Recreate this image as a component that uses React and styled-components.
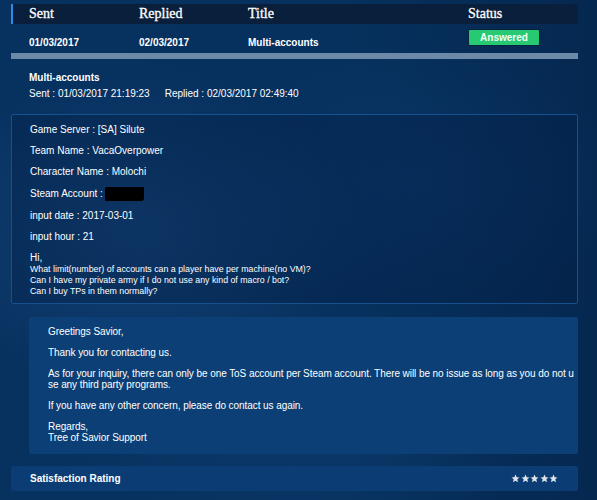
import React from "react";
import styled, { createGlobalStyle } from "styled-components";

const GlobalStyle = createGlobalStyle`
  html, body {
    margin: 0;
    padding: 0;
    background: #062c58;
  }
  body {
    font-family: "Liberation Sans", Arial, sans-serif;
    color: #ffffff;
  }
`;

const Page = styled.div`
  width: 597px;
  height: 500px;
  overflow: hidden;
  box-sizing: border-box;
  padding: 4px 19px 0 11px;
  background:
    radial-gradient(ellipse 220px 160px at 140px 230px, rgba(40, 95, 160, 0.35), transparent),
    radial-gradient(ellipse 200px 140px at 420px 180px, rgba(20, 70, 130, 0.3), transparent),
    radial-gradient(ellipse 260px 120px at 300px 420px, rgba(30, 85, 150, 0.25), transparent),
    linear-gradient(90deg, #07315f 0%, #06305d 60%, #052850 100%);
`;

const Grid = styled.div`
  display: grid;
  grid-template-columns: 110px 109px 220px 1fr;
  padding-left: 18px;
`;

const HeaderRow = styled(Grid)`
  height: 20px;
  align-items: center;
  background: #0a1f3b;
  border-left: 2px solid #2a8ee6;
  padding-left: 16px;
  font-family: "Liberation Serif", "Times New Roman", serif;
  font-size: 14px;
  -webkit-text-stroke: 0.3px #ffffff;
`;

const DataRow = styled(Grid)`
  height: 29px;
  box-sizing: border-box;
  padding-top: 5px;
  align-items: start;
`;

const Cell = styled.div`
  font-size: 10px;
  font-weight: bold;
  line-height: 12px;
  padding-top: 8px;
`;

const Badge = styled.div`
  width: 72px;
  height: 17px;
  box-sizing: border-box;
  border: 1px solid #0a2340;
  border-radius: 2px;
  background: #27c973;
  color: #f4fff8;
  font-size: 10px;
  font-weight: bold;
  line-height: 15px;
  text-align: center;
`;

const Divider = styled.div`
  height: 6px;
  background: #6c89a8;
`;

const Detail = styled.div`
  padding: 11px 0 0 18px;
  height: 55px;
  box-sizing: border-box;
  font-size: 10px;
  line-height: 16px;
`;

const DetailTitle = styled.div`
  font-weight: bold;
`;

const Spacer = styled.span`
  margin-left: 15px;
`;

const QuestionBox = styled.div`
  height: 190px;
  box-sizing: border-box;
  border: 1px solid #17508f;
  border-radius: 2px;
  background: rgba(2, 28, 66, 0.35);
  padding: 9px 18px 0 18px;
  font-size: 10px;
`;

const Para = styled.p`
  margin: 0 0 ${({ $gap }) => $gap}px;
  line-height: ${({ $lh }) => $lh}px;
`;

const Small = styled.div`
  font-size: 8.8px;
  line-height: 11px;
`;

const Redacted = styled.span`
  display: inline-block;
  width: 39px;
  height: 14px;
  background: #000;
  border-radius: 2px 1px 3px 1px;
  vertical-align: -4px;
  margin-left: 2px;
`;

const ReplyBox = styled.div`
  margin: 13px 0 0 18px;
  height: 137px;
  box-sizing: border-box;
  background: #0b3f76;
  border-radius: 2px;
  padding: 9px 1px 0 19px;
  font-size: 10px;
  letter-spacing: -0.07px;
  word-break: break-all;
`;

const RatingBar = styled.div`
  margin-top: 12px;
  height: 25px;
  display: flex;
  align-items: center;
  justify-content: space-between;
  background: #0b3c73;
  border-radius: 2px;
  padding: 0 20px 0 19px;
  font-size: 10px;
  font-weight: bold;
`;

const Stars = styled.div`
  display: flex;
  gap: 0.5px;
`;

const Star = () => (
  <svg width="9" height="9" viewBox="0 0 24 24">
    <path
      d="M12 1.5l3.1 7.1 7.6.6-5.8 5 1.8 7.5L12 17.7l-6.7 4 1.8-7.5-5.8-5 7.6-.6z"
      fill="#dfe3ea"
    />
  </svg>
);

const columns = ["Sent", "Replied", "Title", "Status"];

const info = [
  "Game Server : [SA] Silute",
  "Team Name : VacaOverpower",
  "Character Name : Molochi",
];

export default function App() {
  return (
    <>
      <GlobalStyle />
      <Page>
        <HeaderRow>
          {columns.map((c) => (
            <div key={c}>{c}</div>
          ))}
        </HeaderRow>
        <DataRow>
          <Cell>01/03/2017</Cell>
          <Cell>02/03/2017</Cell>
          <Cell>Multi-accounts</Cell>
          <Badge>Answered</Badge>
        </DataRow>
        <Divider />
        <Detail>
          <DetailTitle>Multi-accounts</DetailTitle>
          <div>
            Sent : 01/03/2017 21:19:23<Spacer>Replied : 02/03/2017 02:49:40</Spacer>
          </div>
        </Detail>
        <QuestionBox>
          {info.map((line) => (
            <Para key={line} $gap={9} $lh={12}>
              {line}
            </Para>
          ))}
          <Para $gap={9} $lh={12}>
            Steam Account :<Redacted />
          </Para>
          <Para $gap={9} $lh={12}>input date : 2017-03-01</Para>
          <Para $gap={9} $lh={12}>input hour : 21</Para>
          <Para $gap={0} $lh={12}>Hi,</Para>
          <Small>
            What limit(number) of accounts can a player have per machine(no VM)?
            <br />
            Can I have my private army if I do not use any kind of macro / bot?
            <br />
            Can I buy TPs in them normally?
          </Small>
        </QuestionBox>
        <ReplyBox>
          <Para $gap={10} $lh={11}>Greetings Savior,</Para>
          <Para $gap={10} $lh={11}>Thank you for contacting us.</Para>
          <Para $gap={10} $lh={11}>
            As for your inquiry, there can only be one ToS account per Steam account. There will be no issue as long as you do not use any third party programs.
          </Para>
          <Para $gap={10} $lh={11}>If you have any other concern, please do contact us again.</Para>
          <Para $gap={0} $lh={11}>
            Regards,
            <br />
            Tree of Savior Support
          </Para>
        </ReplyBox>
        <RatingBar>
          <span>Satisfaction Rating</span>
          <Stars>
            {[0, 1, 2, 3, 4].map((i) => (
              <Star key={i} />
            ))}
          </Stars>
        </RatingBar>
      </Page>
    </>
  );
}
